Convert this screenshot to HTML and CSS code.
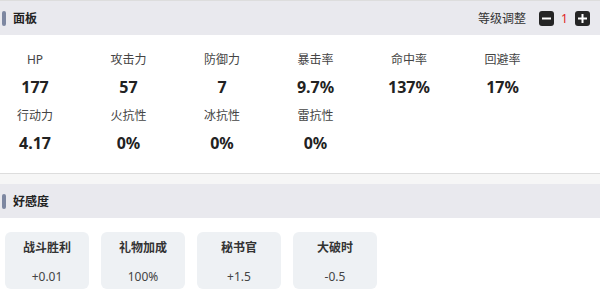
FILE: index.html
```html
<!DOCTYPE html>
<html lang="zh-CN">
<head>
    <meta charset="UTF-8">
    <meta name="viewport" content="width=device-width, initial-scale=1.0">
    <title>面板</title>
    <link rel="stylesheet" href="styles.css">
</head>
<body>
    <div class="section">
        <div class="section-header">
            <span class="bar"></span>
            <span class="section-title">面板</span>
            <div class="level">
                <span class="level-label">等级调整</span>
                <button class="step-btn" aria-label="减少">
                    <svg width="9" height="9" viewBox="0 0 9 9"><rect x="0" y="3.5" width="9" height="2" fill="#fff"/></svg>
                </button>
                <span class="level-value">1</span>
                <button class="step-btn" aria-label="增加">
                    <svg width="9" height="9" viewBox="0 0 9 9"><rect x="0" y="3.5" width="9" height="2" fill="#fff"/><rect x="3.5" y="0" width="2" height="9" fill="#fff"/></svg>
                </button>
            </div>
        </div>
        <div class="stats">
            <div class="stat"><span class="stat-label">HP</span><span class="stat-value">177</span></div>
            <div class="stat"><span class="stat-label">攻击力</span><span class="stat-value">57</span></div>
            <div class="stat"><span class="stat-label">防御力</span><span class="stat-value">7</span></div>
            <div class="stat"><span class="stat-label">暴击率</span><span class="stat-value">9.7%</span></div>
            <div class="stat"><span class="stat-label">命中率</span><span class="stat-value">137%</span></div>
            <div class="stat"><span class="stat-label">回避率</span><span class="stat-value">17%</span></div>
            <div class="stat"><span class="stat-label">行动力</span><span class="stat-value">4.17</span></div>
            <div class="stat"><span class="stat-label">火抗性</span><span class="stat-value">0%</span></div>
            <div class="stat"><span class="stat-label">冰抗性</span><span class="stat-value">0%</span></div>
            <div class="stat"><span class="stat-label">雷抗性</span><span class="stat-value">0%</span></div>
        </div>
    </div>

    <div class="spacer"></div>

    <div class="section">
        <div class="section-header">
            <span class="bar"></span>
            <span class="section-title">好感度</span>
        </div>
        <div class="cards">
            <div class="card"><span class="card-title">战斗胜利</span><span class="card-value">+0.01</span></div>
            <div class="card"><span class="card-title">礼物加成</span><span class="card-value">100%</span></div>
            <div class="card"><span class="card-title">秘书官</span><span class="card-value">+1.5</span></div>
            <div class="card"><span class="card-title">大破时</span><span class="card-value">-0.5</span></div>
        </div>
    </div>
</body>
</html>
```

FILE: styles.css
```css
* {
    margin: 0;
    padding: 0;
    box-sizing: border-box;
}

body {
    background: #ffffff;
    font-family: "Noto Sans", "Noto Sans CJK SC", sans-serif;
    color: #222222;
    border-top: 1px solid #dddddd;
}

.section-header {
    height: 34px;
    background: #e9e9ee;
    display: flex;
    align-items: center;
    padding: 0 10px 0 2px;
}

.bar {
    width: 4px;
    height: 15px;
    background: #7d87a1;
    border-radius: 2px;
    margin-right: 7px;
}

.section-title {
    font-size: 12px;
    font-weight: 700;
    color: #222222;
}

.level {
    margin-left: auto;
    display: flex;
    align-items: center;
}

.level-label {
    font-size: 12px;
    color: #333333;
    margin-right: 13px;
}

.step-btn {
    width: 15px;
    height: 15px;
    border: none;
    border-radius: 3px;
    background: #252525;
    display: flex;
    align-items: center;
    justify-content: center;
    cursor: pointer;
}

.level-value {
    font-size: 12px;
    color: #e02424;
    width: 21px;
    text-align: center;
}

.stats {
    display: grid;
    grid-template-columns: repeat(6, 70px);
    column-gap: 23.5px;
    row-gap: 10px;
    padding: 17px 0 19px;
    border-bottom: 1px solid #dddddd;
}

.stat {
    display: flex;
    flex-direction: column;
    align-items: center;
}

.stat-label {
    font-size: 12px;
    line-height: 16px;
    color: #444444;
    margin-bottom: 8px;
}

.stat-value {
    font-size: 16px;
    line-height: 22px;
    font-weight: 700;
    color: #222222;
}

.spacer {
    height: 10px;
    background: #f6f6f6;
}

.cards {
    display: flex;
    gap: 12px;
    padding: 14px 5px;
}

.card {
    width: 84px;
    height: 57px;
    background: #eef1f4;
    border-radius: 6px;
    display: flex;
    flex-direction: column;
    align-items: center;
    padding-top: 8px;
}

.card-title {
    font-size: 12px;
    line-height: 16px;
    font-weight: 700;
    color: #333333;
    margin-bottom: 13px;
}

.card-value {
    font-size: 12px;
    line-height: 16px;
    color: #444444;
}
```
